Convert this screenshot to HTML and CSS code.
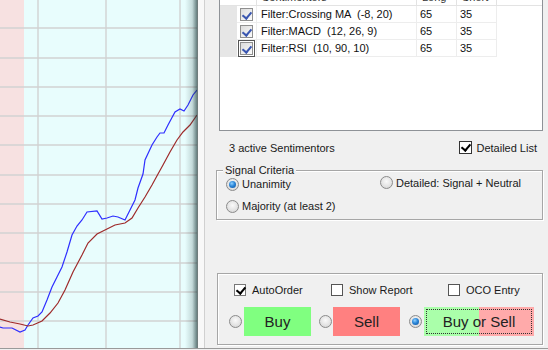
FILE: index.html
```html
<!DOCTYPE html>
<html>
<head>
<meta charset="utf-8">
<link rel="stylesheet" href="styles.css">
</head>
<body>
<div class="window">
  <div class="chart">
    <svg class="chart-svg" width="197" height="348" viewBox="0 0 197 348">
      <defs>
        <linearGradient id="shade" x1="0" y1="0" x2="1" y2="0">
          <stop offset="0" stop-color="#1f3b3b" stop-opacity="0"/>
          <stop offset="0.6" stop-color="#1f3b3b" stop-opacity="0.18"/>
          <stop offset="1" stop-color="#1f3b3b" stop-opacity="0.65"/>
        </linearGradient>
      </defs>
      <rect x="0" y="0" width="24" height="348" fill="#f7e1e1"/>
      <rect x="24" y="0" width="173" height="348" fill="#e8fdfd"/>
      <g stroke="#d2d2d2" stroke-width="1.4">
        <line x1="38" y1="0" x2="38" y2="348"/>
        <line x1="106" y1="0" x2="106" y2="348"/>
        <line x1="180" y1="0" x2="180" y2="348"/>
        <line x1="0" y1="28" x2="197" y2="28"/>
        <line x1="0" y1="58" x2="197" y2="58"/>
        <line x1="0" y1="87" x2="197" y2="87"/>
        <line x1="0" y1="116" x2="197" y2="116"/>
        <line x1="0" y1="145" x2="197" y2="145"/>
        <line x1="0" y1="175" x2="197" y2="175"/>
        <line x1="0" y1="204" x2="197" y2="204"/>
        <line x1="0" y1="233" x2="197" y2="233"/>
        <line x1="0" y1="263" x2="197" y2="263"/>
        <line x1="0" y1="292" x2="197" y2="292"/>
        <line x1="0" y1="321" x2="197" y2="321"/>
      </g>
      <polyline fill="none" stroke="#2e2eff" stroke-width="1.2" points="0,327 3,328 12,328 20,332 25,330 28,325 33,318 38,316 42,312 47,300 52,287 57,277 62,267 67,252 72,235 77,226 82,220 87,212 97,211 102,219 107,218 113,216 118,217 125,220 129,212 135,200 138,188 143,174 145,160 152,145 157,137 160,133 164,133 168,125 175,112 180,109 184,111 188,105 193,95 197,90"/>
      <polyline fill="none" stroke="#9e2a2a" stroke-width="1.2" points="0,319 10,322 20,324 28,326 33,325 42,321 50,313 58,303 65,290 73,272 82,255 88,243 97,234 107,229 115,225 125,223 132,218 138,208 145,197 152,185 158,174 163,165 170,152 177,140 183,132 190,125 197,115"/>
      <rect x="185" y="0" width="12" height="348" fill="url(#shade)"/>
    </svg>
  </div>
  <div class="splitter"></div>
  <div class="panel">
    <div class="list">
      <div class="list-head">
        <div class="hcell hcell-first"></div>
        <div class="hcell">Sentimentors</div>
        <div class="hcell">Long</div>
        <div class="hcell">Short</div>
        <div class="hcell hcell-fill"></div>
      </div>
      <div class="list-row">
        <div class="rowhead"></div>
        <div class="cell cell-check"><span class="lv-check"></span></div>
        <div class="cell cell-name">Filter:Crossing MA  (-8, 20)</div>
        <div class="cell">65</div>
        <div class="cell">35</div>
        <div class="cell-fill"></div>
      </div>
      <div class="list-row">
        <div class="rowhead"></div>
        <div class="cell cell-check"><span class="lv-check"></span></div>
        <div class="cell cell-name">Filter:MACD  (12, 26, 9)</div>
        <div class="cell">65</div>
        <div class="cell">35</div>
        <div class="cell-fill"></div>
      </div>
      <div class="list-row">
        <div class="rowhead"></div>
        <div class="cell cell-check"><span class="lv-check lv-check-focus"></span></div>
        <div class="cell cell-name">Filter:RSI  (10, 90, 10)</div>
        <div class="cell">65</div>
        <div class="cell">35</div>
        <div class="cell-fill"></div>
      </div>
    </div>

    <div class="status-row">
      <span class="status-text">3 active Sentimentors</span>
      <label class="chk-item chk-detailed"><span class="chk chk-on"></span><span>Detailed List</span></label>
    </div>

    <div class="group group-signal">
      <span class="group-title">Signal Criteria</span>
      <div class="signal-grid">
        <label class="radio-item"><span class="radio radio-on"></span><span>Unanimity</span></label>
        <label class="radio-item radio-detailed"><span class="radio"></span><span>Detailed: Signal + Neutral</span></label>
        <label class="radio-item"><span class="radio"></span><span>Majority (at least 2)</span></label>
      </div>
    </div>

    <div class="group group-order">
      <div class="order-checks">
        <label class="chk-item chk-auto"><span class="chk chk-on chk-soft"></span><span>AutoOrder</span></label>
        <label class="chk-item chk-report"><span class="chk"></span><span>Show Report</span></label>
        <label class="chk-item"><span class="chk"></span><span>OCO Entry</span></label>
      </div>
      <div class="order-buttons">
        <span class="radio"></span>
        <span class="btn btn-buy">Buy</span>
        <span class="radio radio-sell"></span>
        <span class="btn btn-sell">Sell</span>
        <span class="radio radio-on radio-both"></span>
        <span class="btn btn-both"><span class="btn-focus">Buy or Sell</span></span>
      </div>
    </div>
  </div>
</div>
</body>
</html>
```

FILE: styles.css
```css
* { box-sizing: border-box; }

html, body {
  margin: 0;
  padding: 0;
}

body {
  width: 548px;
  height: 350px;
  overflow: hidden;
  background: #f0f0f0;
  font-family: "Liberation Sans", Arial, sans-serif;
  font-size: 11px;
  color: #1a1a1a;
}

.window {
  display: flex;
  height: 349px;
  border-bottom: 1px solid #9a9a9a;
  overflow: hidden;
}

.chart {
  width: 197px;
  flex: none;
}

.chart-svg {
  display: block;
}

.splitter {
  width: 8px;
  flex: none;
  background: #f8f8f8;
  border-left: 1px solid #6f7c7c;
  border-right: 1px solid #d0d0d0;
}

.panel {
  flex: 1;
  background: #f0f0f0;
  display: flex;
  flex-direction: column;
}

/* list view */
.list {
  margin: -18px 5px 0 14px;
  height: 149px;
  border: 1px solid #8e9297;
  background: #fff;
  flex: none;
}

.list-head {
  display: grid;
  grid-template-columns: 37px 160px 40px 40px 1fr;
  height: 23px;
  border-bottom: 1px solid #e3e3e3;
}

.hcell {
  border-right: 1px solid #e3e3e3;
  padding: 8px 0 0 5px;
  color: #333;
  line-height: 12px;
  overflow: hidden;
}

.hcell-fill { border-right: none; }

.list-row {
  display: grid;
  grid-template-columns: 17px 20px 160px 40px 40px 1fr;
  height: 17px;
}

.rowhead {
  background: #e6e6e6;
}

.cell {
  border-right: 1px solid #ededed;
  border-bottom: 1px solid #ededed;
  padding-left: 3px;
  line-height: 16px;
  white-space: pre;
  color: #111;
}

.cell-name {
  padding-left: 4px;
}

.cell-check {
  padding-left: 3px;
  display: flex;
  align-items: center;
}

.lv-check {
  width: 13px;
  height: 13px;
  border: 1px solid #8f8f8f;
  background: linear-gradient(135deg, #dcdcdc, #fbfbfb);
  position: relative;
  display: block;
}

.lv-check::after {
  content: "";
  position: absolute;
  left: 3px;
  top: 1px;
  width: 4px;
  height: 7px;
  border-right: 2px solid #3a56b0;
  border-bottom: 2px solid #3a56b0;
  transform: rotate(40deg);
}

.lv-check-focus {
  outline: 1px solid #555;
  outline-offset: 1px;
}

/* status row */
.status-row {
  display: flex;
  align-items: center;
  justify-content: space-between;
  margin: 5px 11px 0 24px;
  height: 23px;
  flex: none;
}

.chk-item {
  display: flex;
  align-items: center;
  gap: 4px;
}

.chk {
  width: 13px;
  height: 13px;
  border: 1px solid #333;
  background: #fff;
  position: relative;
  display: block;
  flex: none;
}

.chk-soft { border-color: #707070; }

.chk-on::after {
  content: "";
  position: absolute;
  left: 3px;
  top: 0px;
  width: 4px;
  height: 7px;
  border-right: 2px solid #000;
  border-bottom: 2px solid #000;
  transform: rotate(40deg);
}

/* group boxes */
.group {
  position: relative;
  border: 1px solid #a6a6a6;
  box-shadow: inset 1px 1px 0 #fff, 1px 1px 0 #fff;
  flex: none;
}

.group-title {
  position: absolute;
  left: 6px;
  top: -7px;
  padding: 0 2px;
  background: #f0f0f0;
  line-height: 13px;
}

.group-signal {
  margin: 11px 5px 0 11px;
  height: 50px;
  padding: 2px 0 0 9px;
}

.signal-grid {
  display: grid;
  grid-template-columns: 154px 1fr;
  grid-auto-rows: 22px;
}

.radio-item {
  display: flex;
  align-items: center;
  gap: 3px;
}

.radio-detailed {
  grid-row: 1;
  grid-column: 2;
  margin-top: -3px;
}

.radio {
  width: 13px;
  height: 13px;
  border-radius: 50%;
  border: 1px solid #8b8b8b;
  background: radial-gradient(circle at 50% 40%, #fafafa 0%, #e2e2e2 60%, #cfcfcf 100%);
  display: block;
  flex: none;
  position: relative;
}

.radio-on::after {
  content: "";
  position: absolute;
  left: 2px;
  top: 2px;
  width: 7px;
  height: 7px;
  border-radius: 50%;
  background: radial-gradient(circle at 40% 35%, #8fd0ff 0%, #2a86d8 45%, #0b4d99 100%);
}

.group-order {
  margin: 53px 5px 0 12px;
  height: 72px;
  padding: 9px 0 0 0;
}

.order-checks {
  display: flex;
  padding-left: 16px;
  height: 13px;
}

.order-checks .chk-item { gap: 6px; }
.order-checks .chk { width: 12px; height: 12px; border-color: #555; }
.order-checks .chk-soft { border-color: #777; }

.chk-auto { width: 97px; }
.chk-report { width: 117px; }

.order-buttons {
  display: flex;
  align-items: center;
  margin-top: 11px;
  padding-left: 11px;
  height: 29px;
}

.btn {
  height: 29px;
  display: flex;
  align-items: center;
  justify-content: center;
  font-size: 15px;
  color: #222;
}

.btn-buy {
  width: 67px;
  margin-left: 2px;
  background: #80ff80;
}

.radio-sell { margin-left: 8px; }

.btn-sell {
  width: 67px;
  margin-left: 1px;
  background: #ff8080;
}

.radio-both { margin-left: 9px; }

.btn-both {
  width: 110px;
  margin-left: 2px;
  background: linear-gradient(90deg, #aaffaa 0, #aaffaa 55px, #ffaaaa 55px, #ffaaaa 100%);
  padding: 2px;
}

.btn-focus {
  flex: 1;
  align-self: stretch;
  display: flex;
  align-items: center;
  justify-content: center;
  border: 1px dotted #333;
}
```
